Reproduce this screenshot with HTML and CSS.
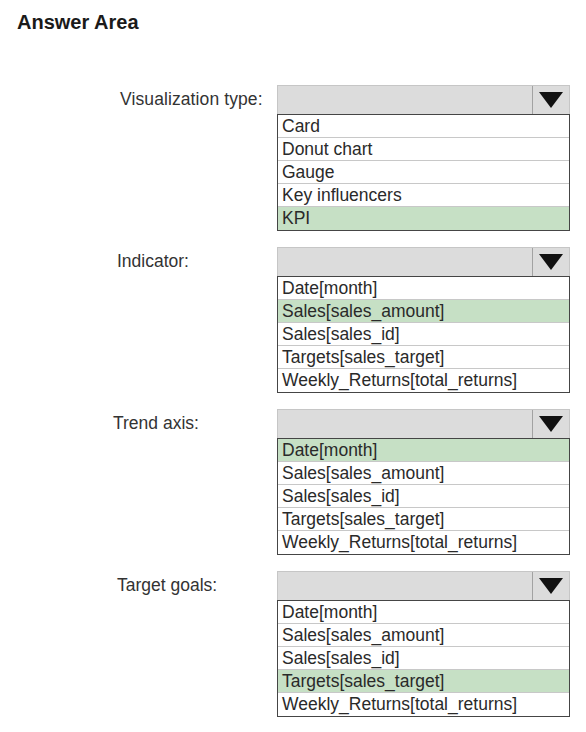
FILE: index.html
```html
<!DOCTYPE html>
<html lang="en">

<head>
  <meta charset="UTF-8" />
  <meta name="viewport" content="width=device-width, initial-scale=1.0" />
  <title>Answer Area</title>
  <link rel="stylesheet" href="styles.css">
</head>

<body>
  <h1 class="title">Answer Area</h1>

  <div class="fields">
    <div class="field">
      <span class="field-label shift-right">Visualization type:</span>
      <div class="picker">
        <div class="picker-head">
          <span class="picker-arrow">
            <svg width="24" height="16" viewBox="0 0 24 16"><polygon points="0,0 24,0 12,16" fill="#111" /></svg>
          </span>
        </div>
        <ul class="picker-list">
          <li>Card</li>
          <li>Donut chart</li>
          <li>Gauge</li>
          <li>Key influencers</li>
          <li class="picked">KPI</li>
        </ul>
      </div>
    </div>

    <div class="field">
      <span class="field-label">Indicator:</span>
      <div class="picker">
        <div class="picker-head">
          <span class="picker-arrow">
            <svg width="24" height="16" viewBox="0 0 24 16"><polygon points="0,0 24,0 12,16" fill="#111" /></svg>
          </span>
        </div>
        <ul class="picker-list">
          <li>Date[month]</li>
          <li class="picked">Sales[sales_amount]</li>
          <li>Sales[sales_id]</li>
          <li>Targets[sales_target]</li>
          <li>Weekly_Returns[total_returns]</li>
        </ul>
      </div>
    </div>

    <div class="field">
      <span class="field-label shift-left">Trend axis:</span>
      <div class="picker">
        <div class="picker-head">
          <span class="picker-arrow">
            <svg width="24" height="16" viewBox="0 0 24 16"><polygon points="0,0 24,0 12,16" fill="#111" /></svg>
          </span>
        </div>
        <ul class="picker-list">
          <li class="picked">Date[month]</li>
          <li>Sales[sales_amount]</li>
          <li>Sales[sales_id]</li>
          <li>Targets[sales_target]</li>
          <li>Weekly_Returns[total_returns]</li>
        </ul>
      </div>
    </div>

    <div class="field">
      <span class="field-label">Target goals:</span>
      <div class="picker">
        <div class="picker-head">
          <span class="picker-arrow">
            <svg width="24" height="16" viewBox="0 0 24 16"><polygon points="0,0 24,0 12,16" fill="#111" /></svg>
          </span>
        </div>
        <ul class="picker-list">
          <li>Date[month]</li>
          <li>Sales[sales_amount]</li>
          <li>Sales[sales_id]</li>
          <li class="picked">Targets[sales_target]</li>
          <li>Weekly_Returns[total_returns]</li>
        </ul>
      </div>
    </div>
  </div>
</body>

</html>
```

FILE: styles.css
```css
body {
  margin: 0;
  padding: 0;
  font-family: 'Liberation Sans', Arial, sans-serif;
  background-color: #fff;
  color: #2a2a2a;
}

.title {
  margin: 11px 0 0 17px;
  font-size: 20px;
  line-height: 23px;
  font-weight: bold;
  color: #1a1a1a;
}

.fields {
  margin-top: 51px;
  padding-left: 117px;
  display: flex;
  flex-direction: column;
  gap: 16px;
}

.field {
  display: grid;
  grid-template-columns: 160px 293px;
}

.field-label {
  font-size: 17.5px;
  line-height: 29px;
  color: #333;
}

.shift-right {
  padding-left: 3px;
  letter-spacing: 0.1px;
}

.shift-left {
  margin-left: -4px;
}

.picker-head {
  box-sizing: border-box;
  height: 29px;
  display: flex;
  justify-content: flex-end;
  background-color: #dcdcdc;
  border: 1px solid #c6c6c6;
  border-bottom: none;
}

.picker-arrow {
  width: 36px;
  display: flex;
  align-items: center;
  justify-content: center;
  border-left: 1px solid #a2a2a2;
}

.picker-list {
  list-style: none;
  margin: 0;
  padding: 0;
  border: 1px solid #454545;
}

.picker-list li {
  box-sizing: border-box;
  height: 23px;
  padding-left: 4px;
  font-size: 17.5px;
  line-height: 22px;
  white-space: nowrap;
  border-bottom: 1px solid #c8c8c8;
}

.picker-list li:last-child {
  border-bottom: none;
}

.picker-list li.picked {
  background-color: #c6e0c5;
}
```
